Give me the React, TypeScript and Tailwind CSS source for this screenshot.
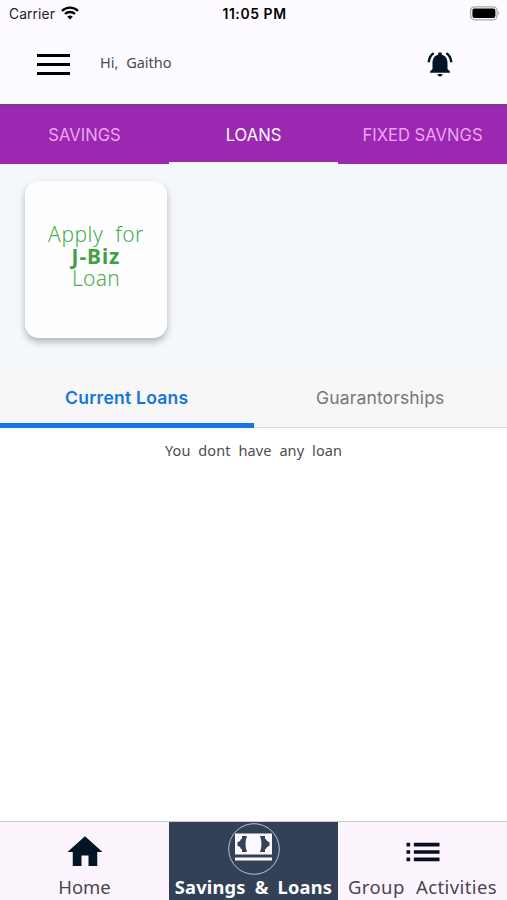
import { MdHome, MdList, MdNotificationsActive } from "react-icons/md";

function StatusBar() {
  return (
    <div className="flex h-7 items-center justify-between pl-[9px] pr-[7px] text-black">
      <div className="flex w-40 items-center gap-[6px]">
        <span className="text-[13.8px] tracking-[0.1px] text-[#222]">Carrier</span>
        <svg className="-mt-[3px]" width="18" height="14" viewBox="0 0 18 14" fill="none" stroke="black" strokeWidth="2.4">
          <path d="M1 4.9a11.4 11.4 0 0 1 16 0" />
          <path d="M4 8a7.1 7.1 0 0 1 10 0" />
          <path d="M9 13.6 6.2 10.8a4 4 0 0 1 5.6 0z" fill="black" stroke="none" />
        </svg>
      </div>
      <span className="text-[13.9px] font-semibold tracking-[0.6px]">11:05 PM</span>
      <div className="-mt-[2px] flex w-40 justify-end">
        <svg width="31" height="15" viewBox="0 0 31 15">
          <rect x="1.6" y="0.8" width="26.5" height="13" rx="4" fill="none" stroke="#a9a9a9" strokeWidth="1.3" />
          <rect x="3.4" y="2.6" width="23" height="9.4" rx="2.2" fill="black" />
          <path d="M29.4 5.2q2 2 0 4z" fill="#a9a9a9" />
        </svg>
      </div>
    </div>
  );
}

function Header() {
  return (
    <header className="flex h-[76px] items-center pb-[4px] pl-[37px] pr-[52px]">
      <div className="flex w-[33px] flex-col gap-[6px]">
        {[1, 2, 3].map((i) => (
          <div key={i} className="h-[3px] w-full bg-black" />
        ))}
      </div>
      <span className="ml-[30px] pb-[3px] font-['Noto_Sans',sans-serif] text-[14.5px] text-[#4c4c50] [word-spacing:4px]">
        Hi, Gaitho
      </span>
      <MdNotificationsActive className="ml-auto text-[#021527]" size={30} />
    </header>
  );
}

function TopTabs() {
  return (
    <nav className="grid h-[60px] grid-cols-3 border-t-2 border-[#783a8c] bg-[#9c27b0] text-[16.6px] text-[#eda6f5]">
      <div className="flex items-center justify-center">SAVINGS</div>
      <div className="flex items-center justify-center border-b-2 border-[#f7f9fa] pt-[2px] text-white">LOANS</div>
      <div className="flex items-center justify-center">FIXED SAVNGS</div>
    </nav>
  );
}

function LoanCard() {
  return (
    <div className="flex h-[157px] w-[142px] flex-col items-center rounded-[14px] bg-[#fefdff] pt-[42px] font-['Noto_Sans',sans-serif] text-[21px] leading-[22px] text-[#4caf50] shadow-[0_4px_7px_rgba(0,0,0,0.27)]">
      <span className="font-light tracking-[0.5px] [word-spacing:6px]">Apply for</span>
      <span className="font-bold tracking-[0.9px] text-[#43a047]">J-Biz</span>
      <span className="font-light tracking-[0.3px]">Loan</span>
    </div>
  );
}

function MoneyIcon() {
  return (
    <svg width="52" height="52" viewBox="0 0 52 52">
      <circle cx="26" cy="26" r="25.3" fill="none" stroke="#b9c3cf" strokeWidth="1" />
      <path d="M7 10.5h37v21H7z" fill="#fff8ff" />
      <path d="M14 13h5q-3 8 0 16h-5v-3h-1q-1-3-3.5-3v-4q2.500 0 3.500-3h1z" fill="#34435a" />
      <path d="M37 13h-5q3 8 0 16h5v-3h1q1-3 3.5-3v-4q-2.500 0-3.500-3h-1z" fill="#34435a" />
      <path d="M7 34.5h37v3H7z" fill="#fff8ff" />
    </svg>
  );
}

function BottomNav() {
  return (
    <nav className="grid h-[79px] grid-cols-3 border-t border-[#ccc9d0] bg-[#fdf5fe] font-['Noto_Sans',sans-serif] text-[18.5px] leading-[26px] text-[#49464e]">
      <div className="flex flex-col items-center justify-between pt-[9px]">
        <MdHome className="-mb-2 shrink-0 text-[#021527]" size={42} />
        <span>Home</span>
      </div>
      <div className="flex flex-col items-center justify-between bg-[#324155] pt-px text-white">
        <MoneyIcon />
        <span className="-mt-2 whitespace-nowrap text-[18.3px] font-bold tracking-[0.2px] [word-spacing:4px]">Savings &amp; Loans</span>
      </div>
      <div className="flex flex-col items-center justify-between pt-[8px]">
        <MdList className="-mb-2 shrink-0 text-[#08101f]" size={44} />
        <span className="whitespace-nowrap tracking-[0.4px] [word-spacing:6px]">Group Activities</span>
      </div>
    </nav>
  );
}

export default function App() {
  return (
    <div className="flex h-[900px] w-[507px] flex-col overflow-hidden bg-[#fdfbff] font-['Inter',sans-serif]">
      <StatusBar />
      <Header />
      <TopTabs />
      <section className="h-[203px] bg-[#f5f8fa] pl-[25px] pt-[17px]">
        <LoanCard />
      </section>
      <div className="grid h-[61px] grid-cols-2 bg-[#f7f7f8] text-[17.5px]">
        <div className="flex items-center justify-center border-b-[5px] border-[#1675e0] pt-[6px] font-semibold tracking-[0.25px] text-[#1675d8]">
          Current Loans
        </div>
        <div className="flex items-center justify-center border-b border-[#dcdcdc] pt-[2px] tracking-[0.15px] text-[#767676]">
          Guarantorships
        </div>
      </div>
      <main className="flex-1 bg-white pt-[11px] text-center font-['Noto_Sans',sans-serif] text-[14.5px] leading-[22px] tracking-[0.1px] text-[#4c4c50] [word-spacing:4px]">
        You dont have any loan
      </main>
      <BottomNav />
    </div>
  );
}
